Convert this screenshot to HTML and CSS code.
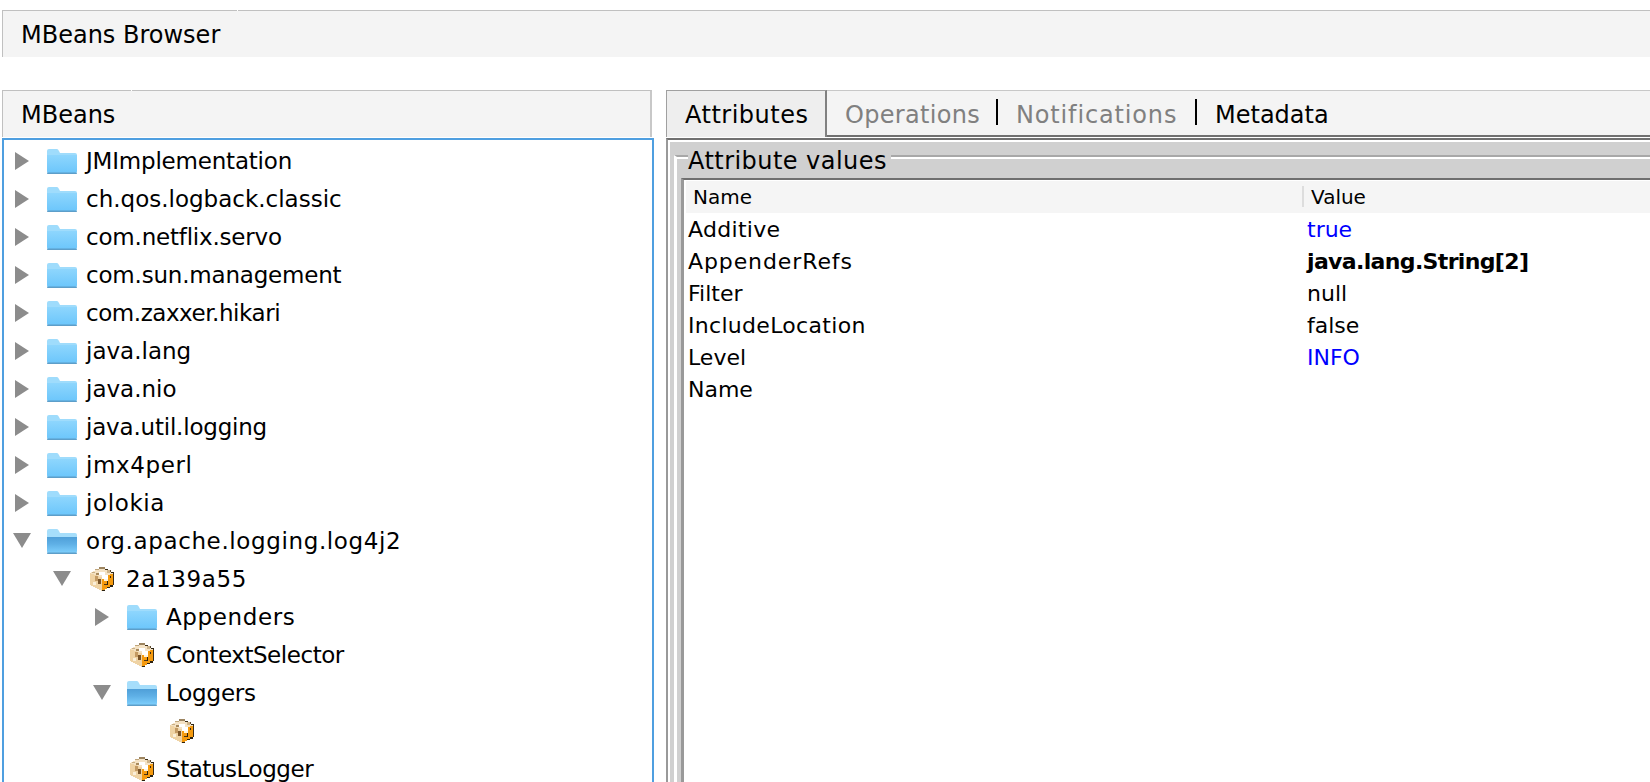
FILE: index.html
```html
<!DOCTYPE html>
<html lang="en">
<head>
  <meta charset="UTF-8">
  <title>MBeans Browser</title>
  <link rel="stylesheet" href="styles.css">
</head>
<body>
  <!-- shared icons -->
  <svg class="defs" width="0" height="0">
    <defs>
      <linearGradient id="fold" x1="0" y1="0" x2="0" y2="1">
        <stop offset="0" stop-color="#8ed6fd"/>
        <stop offset="1" stop-color="#6cc6fb"/>
      </linearGradient>
      <linearGradient id="foldOpen" x1="0" y1="0" x2="0" y2="1">
        <stop offset="0" stop-color="#4f9fd8"/>
        <stop offset="0.45" stop-color="#5fb0e6"/>
        <stop offset="1" stop-color="#7fd0fd"/>
      </linearGradient>
      <symbol id="folder" viewBox="0 0 30 25">
        <path d="M1 24 Q0 24 0 22 V2 Q0 0 2 0 H10 Q11 0 12 2 L13 4 H28 Q30 4 30 6 V22 Q30 24 28 24 Z" fill="#9fdcfc"/>
        <path d="M0 6 H30 V22 Q30 24 28 24 H2 Q0 24 0 22 Z" fill="url(#fold)"/>
        <rect x="0" y="23.5" width="30" height="1.5" rx="0.7" fill="#5d9ec9"/>
      </symbol>
      <symbol id="folderOpen" viewBox="0 0 30 25">
        <path d="M1 24 Q0 24 0 22 V2 Q0 0 2 0 H10 Q11 0 12 2 L13 4 H28 Q30 4 30 6 V22 Q30 24 28 24 Z" fill="#a6defb"/>
        <path d="M0 8 H30 V22 Q30 24 28 24 H2 Q0 24 0 22 Z" fill="url(#foldOpen)"/>
        <rect x="0" y="23.5" width="30" height="1.5" rx="0.7" fill="#5d9ec9"/>
      </symbol>
      <symbol id="bean" viewBox="0 0 16 16">
        <g shape-rendering="crispEdges">
          <polygon points="0,4 8,7 8,16 0,12" fill="#efd3a4"/>
          <polygon points="8,7 16,4 16,12 8,16" fill="#f59a0e"/>
          <polygon points="0,4 8,0 16,4 8,7" fill="#f4e2c4"/>
          <rect x="6" y="0" width="4" height="1" fill="#9c8460"/>
          <rect x="10" y="1" width="2" height="1" fill="#3a2c18"/>
          <rect x="12" y="2" width="2" height="1" fill="#5b4a30"/>
          <rect x="14" y="3" width="2" height="1" fill="#2b2110"/>
          <rect x="15" y="4" width="1" height="8" fill="#3a2c18"/>
          <rect x="13" y="12" width="2" height="1" fill="#2b2110"/>
          <rect x="11" y="13" width="2" height="1" fill="#2b2110"/>
          <rect x="8" y="15" width="2" height="1" fill="#2b2110"/>
          <rect x="3" y="1" width="3" height="1" fill="#c0a67c"/>
          <rect x="1" y="3" width="2" height="1" fill="#c8ae84"/>
          <rect x="3" y="6" width="2" height="3" fill="#c49a62"/>
          <rect x="5" y="8" width="2" height="3" fill="#7a5428"/>
          <rect x="2" y="10" width="2" height="2" fill="#fbefd8"/>
          <rect x="6" y="3" width="4" height="2" fill="#ffffff"/>
          <rect x="8" y="5" width="4" height="3" fill="#ffffff"/>
          <rect x="9" y="8" width="3" height="1" fill="#fff4dc"/>
          <rect x="11" y="9" width="1" height="3" fill="#2b2110"/>
          <rect x="9" y="11" width="2" height="1" fill="#4a3418"/>
          <rect x="4" y="4" width="2" height="1" fill="#a88a5c"/>
          <rect x="11" y="2" width="2" height="2" fill="#cdb48c"/>
          <rect x="13" y="6" width="1" height="1" fill="#3a2c18"/>
        </g>
      </symbol>
    </defs>
  </svg>

  <div class="title-bar">MBeans Browser<i class="notch notch-title"></i></div>

  <div class="split">
    <div class="left-pane">
      <div class="pane-head">MBeans<i class="notch notch-pane"></i></div>
      <ul class="tree">
        <li class="node d0 sp-n"><span class="arrow right"></span><svg class="ico"><use href="#folder"/></svg>JMImplementation</li>
        <li class="node d0"><span class="arrow right"></span><svg class="ico"><use href="#folder"/></svg>ch.qos.logback.classic</li>
        <li class="node d0 sp-n"><span class="arrow right"></span><svg class="ico"><use href="#folder"/></svg>com.netflix.servo</li>
        <li class="node d0 sp-n"><span class="arrow right"></span><svg class="ico"><use href="#folder"/></svg>com.sun.management</li>
        <li class="node d0 sp-t"><span class="arrow right"></span><svg class="ico"><use href="#folder"/></svg>com.zaxxer.hikari</li>
        <li class="node d0"><span class="arrow right"></span><svg class="ico"><use href="#folder"/></svg>java.lang</li>
        <li class="node d0"><span class="arrow right"></span><svg class="ico"><use href="#folder"/></svg>java.nio</li>
        <li class="node d0 sp-n"><span class="arrow right"></span><svg class="ico"><use href="#folder"/></svg>java.util.logging</li>
        <li class="node d0 sp-w"><span class="arrow right"></span><svg class="ico"><use href="#folder"/></svg>jmx4perl</li>
        <li class="node d0 sp-w"><span class="arrow right"></span><svg class="ico"><use href="#folder"/></svg>jolokia</li>
        <li class="node d0 sp-w"><span class="arrow down"></span><svg class="ico"><use href="#folderOpen"/></svg>org.apache.logging.log4j2</li>
        <li class="node d1 sp-w"><span class="arrow down"></span><svg class="ico bean"><use href="#bean"/></svg>2a139a55</li>
        <li class="node d2 sp-w"><span class="arrow right"></span><svg class="ico"><use href="#folder"/></svg>Appenders</li>
        <li class="node d2 sp-t"><span class="arrow none"></span><svg class="ico bean"><use href="#bean"/></svg>ContextSelector</li>
        <li class="node d2 sp-n"><span class="arrow down"></span><svg class="ico"><use href="#folderOpen"/></svg>Loggers</li>
        <li class="node d3"><span class="arrow none"></span><svg class="ico bean"><use href="#bean"/></svg></li>
        <li class="node d2 sp-t"><span class="arrow none"></span><svg class="ico bean"><use href="#bean"/></svg>StatusLogger</li>
      </ul>
    </div>

    <div class="right-pane">
      <div class="tabs">
        <div class="tab active">Attributes</div>
        <div class="tab disabled ops">Operations</div>
        <div class="tab disabled notif">Notifications</div>
        <div class="tab last">Metadata</div>
        <div class="tab-rest"></div>
      </div>

      <div class="panel">
        <div class="panel-inner">
          <div class="group">
            <div class="group-head">
              <span class="etch first"></span>
              <span class="group-title">Attribute values</span>
              <span class="etch"></span>
            </div>
            <div class="group-body">
              <div class="attr-table">
                <div class="attr-header">
                  <div class="col-name">Name</div>
                  <div class="col-value">Value</div>
                </div>
                <div class="attr-row"><div class="sp-s">Additive</div><div class="val-edit">true</div></div>
                <div class="attr-row"><div class="sp-l">AppenderRefs</div><div class="val-bold">java.lang.String[2]</div></div>
                <div class="attr-row"><div>Filter</div><div>null</div></div>
                <div class="attr-row"><div class="sp-s">IncludeLocation</div><div>false</div></div>
                <div class="attr-row"><div>Level</div><div class="val-edit">INFO</div></div>
                <div class="attr-row"><div>Name</div><div></div></div>
              </div>
            </div>
          </div>
        </div>
      </div>
    </div>
  </div>
</body>
</html>
```

FILE: styles.css
```css
/* Reset */
* {
  margin: 0;
  padding: 0;
  box-sizing: border-box;
}

html, body {
  width: 100%;
  height: 100%;
  overflow: hidden;
}

body {
  background-color: #fff;
  color: #000;
  font-family: "DejaVu Sans", sans-serif;
  font-size: 24px;
}

.defs {
  position: absolute;
}

/* Top title bar */
.title-bar {
  position: relative;
  height: 47px;
  margin: 10px 0 0 2px;
  padding-left: 18px;
  line-height: 48px;
  background-color: #f4f4f4;
  border-top: 1px solid #c0c0c0;
  border-left: 1px solid #c0c0c0;
}

.notch {
  position: absolute;
  top: -1px;
  width: 1px;
  height: 1px;
  background-color: #fff;
}

.notch-title { left: 234px; }
.notch-pane { left: 128px; }

/* Two columns */
.split {
  display: flex;
  gap: 12px;
  margin-top: 33px;
  margin-left: 2px;
}

.left-pane {
  width: 652px;
  flex-shrink: 0;
}

.pane-head {
  position: relative;
  height: 47px;
  margin-right: 2px;
  padding-left: 18px;
  line-height: 48px;
  background-color: #f4f4f4;
  border-top: 1px solid #c0c0c0;
  border-left: 1px solid #c0c0c0;
  border-right: 2px solid #c8c8c8;
}

/* Tree */
.tree {
  list-style: none;
  height: 660px;
  margin-top: 1px;
  padding-top: 2px;
  border: 2px solid #4f9fe0;
  border-bottom: 0;
  white-space: nowrap;
}

.node {
  display: flex;
  align-items: center;
  height: 38px;
  font-size: 23px;
  line-height: 40px;
}

.d0 { padding-left: 9px; }
.d1 { padding-left: 49px; }
.d2 { padding-left: 89px; }
.d3 { padding-left: 129px; }

/* Java text runs wider or narrower than the font here, per label */
.sp-t { letter-spacing: -0.45px; }
.sp-n { letter-spacing: -0.2px; }
.sp-w { letter-spacing: 0.62px; }
.sp-s { letter-spacing: 0.3px; }
.sp-l { letter-spacing: 0.9px; }

.arrow {
  width: 34px;
  flex-shrink: 0;
  height: 0;
}

.arrow.right {
  margin-left: 2px;
  width: 32px;
  border-left: 14px solid #8c8c8c;
  border-top: 9px solid transparent;
  border-bottom: 9px solid transparent;
  background-clip: padding-box;
}

.arrow.down::before {
  content: "";
  display: block;
  width: 0;
  margin-top: -8px;
  border-top: 15px solid #8c8c8c;
  border-left: 9px solid transparent;
  border-right: 9px solid transparent;
}

.ico {
  width: 30px;
  height: 25px;
  margin-right: 9px;
  flex-shrink: 0;
}

.ico.bean {
  width: 24px;
  height: 24px;
  margin: 0 12px 0 3px;
}

/* Tabs */
.right-pane {
  flex: 1;
  min-width: 0;
}

.tabs {
  display: flex;
  height: 47px;
  border-top: 1px solid #c8c8c8;
  background-color: #f4f4f4;
  border-bottom: 2px solid #707070;
}

.tab {
  position: relative;
  line-height: 48px;
  padding-left: 18px;
  flex-shrink: 0;
}

.tab.active {
  width: 161px;
  height: 47px;
  margin-top: -1px;
  letter-spacing: 0.5px;
  background-color: #eeeeee;
  border: 1px solid #a0a0a0;
  border-bottom: 0;
  border-right: 2px solid #808080;
}

.tab.disabled {
  color: #808080;
}

.tab.disabled::after {
  content: "";
  position: absolute;
  right: 0;
  top: 8px;
  width: 2px;
  height: 26px;
  background-color: #000;
}

.tab.ops {
  width: 171px;
  letter-spacing: 0.3px;
}

.tab.notif {
  width: 199px;
  letter-spacing: 0.85px;
}

.tab.last {
  width: 148px;
}

.tab-rest {
  flex: 1;
}

/* Attribute panel */
.panel {
  height: 644px;
  margin-top: 1px;
  border-top: 2px solid #707070;
  border-left: 2px solid #999;
}

.panel-inner {
  height: 100%;
  padding-left: 2px;
  padding-top: 3px;
  border-top: 2px solid #fff;
  background: linear-gradient(#fff, #fff) left top / 2px 100% no-repeat, #d0d0d0;
}

.group {
  margin-left: 4px;
  height: 100%;
}

.group-head {
  display: flex;
  height: 33px;
}

.group-title {
  padding-right: 4px;
  line-height: 32px;
  letter-spacing: 0.45px;
}

.etch {
  flex: 1;
  margin-top: 10px;
  border-top: 2px solid #a8a8a8;
  box-shadow: inset 0 2px 0 #fff;
}

.etch.first {
  flex: none;
  width: 14px;
  border-left: 3px solid #fff;
}

.group-body {
  height: 100%;
  border-left: 3px solid #fff;
  padding-left: 4px;
}

.attr-table {
  height: 100%;
  background-color: #fff;
  border-top: 2px solid #6f6f6f;
  border-left: 3px solid #999;
}

.attr-header {
  display: flex;
  height: 32px;
  margin-top: 1px;
  margin-left: 2px;
  line-height: 33px;
  font-size: 20px;
  background-color: #f5f5f5;
}

.col-name {
  width: 616px;
  padding-left: 7px;
}

.col-value {
  position: relative;
  padding-left: 9px;
}

.col-value::before {
  content: "";
  position: absolute;
  left: 0;
  top: 5px;
  width: 2px;
  height: 21px;
  background-color: #ddd;
}

.attr-row {
  display: flex;
  height: 32px;
  padding-left: 4px;
  line-height: 34px;
  font-size: 22px;
}

.attr-row div:first-child {
  width: 619px;
}

.val-edit {
  color: #0000ff;
}

.val-bold {
  font-weight: bold;
  letter-spacing: -0.65px;
}
```
